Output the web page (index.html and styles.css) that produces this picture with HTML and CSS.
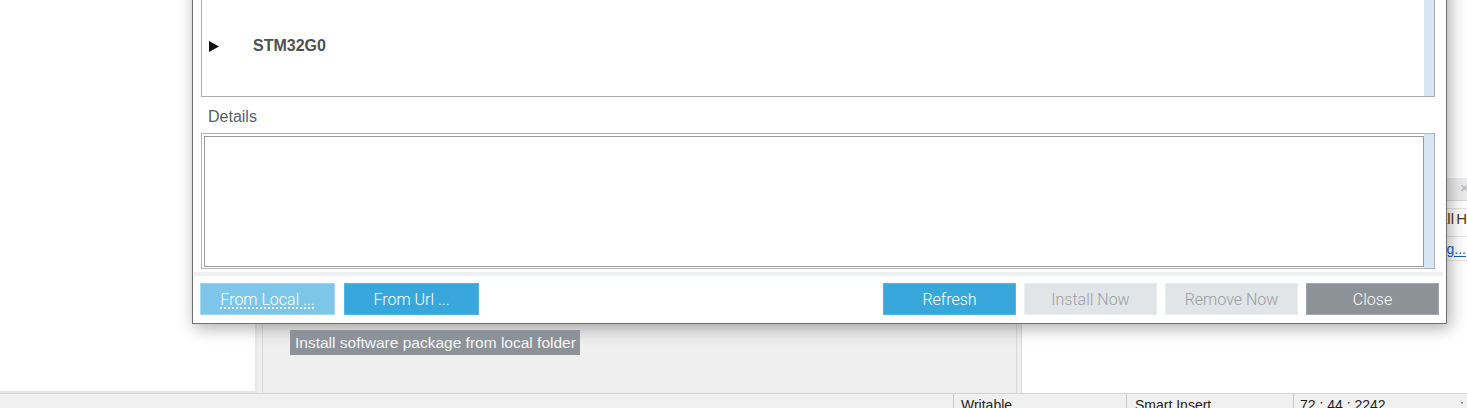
FILE: index.html
```html
<!DOCTYPE html>
<html>
<head>
<meta charset="utf-8">
<title>Embedded Software Packages Manager</title>
<link rel="stylesheet" href="styles.css">
</head>
<body>
<div class="workbench">
  <div class="main">
    <div class="panel-left"></div>
    <div class="panel-mid"></div>
    <div class="panel-right">
      <div class="tabbar"><span class="tab-close">×</span></div>
      <div class="rp-gap"></div>
      <div class="rp-title">Install H</div>
      <div class="rp-link"><a class="link">Config...</a></div>
    </div>
  </div>
  <div class="statusbar">
    <div class="sb-spacer"></div>
    <div class="sb-field sb-f1">Writable</div>
    <div class="sb-field sb-f2">Smart Insert</div>
    <div class="sb-field sb-f3">72 : 44 : 2242</div>
    <div class="sb-grip">:</div>
  </div>
</div>

<div class="dialog">
  <div class="tree">
    <div class="tree-list">
      <div class="tree-row">
        <svg class="twisty" width="10" height="11" viewBox="0 0 10 11"><polygon points="0,0 10,5.5 0,11"/></svg>
        <span class="tree-label">STM32G0</span>
      </div>
    </div>
    <div class="vscroll"></div>
  </div>
  <div class="details-label">Details</div>
  <div class="details">
    <div class="details-text"></div>
    <div class="vscroll"></div>
  </div>
  <div class="sep"></div>
  <div class="actions">
    <div class="group">
      <button class="btn btn-light"><span class="focus-text">From Local ...</span></button>
      <button class="btn btn-blue">From Url ...</button>
    </div>
    <div class="group group-right">
      <button class="btn btn-blue">Refresh</button>
      <button class="btn btn-disabled">Install Now</button>
      <button class="btn btn-disabled">Remove Now</button>
      <button class="btn btn-gray">Close</button>
    </div>
  </div>
</div>

<div class="tooltip">Install software package from local folder</div>
</body>
</html>
```

FILE: styles.css
```css
* { box-sizing: border-box; }
html, body { margin: 0; padding: 0; }
body {
  width: 1467px;
  height: 408px;
  overflow: hidden;
  position: relative;
  background: #efefef;
  font-family: "Liberation Sans", Arial, sans-serif;
}

/* ---------- background workbench ---------- */
.workbench { display: flex; flex-direction: column; height: 408px; }
.main { height: 393px; display: flex; }
.panel-left {
  width: 257px;
  background: #fff;
  border-right: 2px solid #e6e6e6;
  border-bottom: 2px solid #e6e6e6;
}
.panel-mid {
  width: 755px;
  margin-left: 5px;
  background: #efefef;
  border-left: 1px solid #d9d9d9;
  border-right: 1px solid #d9d9d9;
}
.panel-right {
  flex: 1;
  margin-left: 4px;
  background: #fff;
  border-left: 1px solid #d9d9d9;
  display: flex;
  flex-direction: column;
  overflow: hidden;
}
.tabbar {
  margin-top: 178px;
  height: 23px;
  background: #ececec;
  border-bottom: 1px solid #d6d6d6;
  display: flex;
  justify-content: flex-end;
  align-items: center;
}
.tab-close {
  font-size: 15px;
  color: #b0b0b0;
  width: 7px;
  overflow: hidden;
  line-height: 16px;
  margin-bottom: 2px;
}
.rp-gap { height: 7px; }
.rp-title {
  border-top: 1px solid #e3e3e3;
  border-bottom: 1px solid #e3e3e3;
  padding: 1px 0 9px 0;
  font-size: 15px;
  line-height: 17px;
  word-spacing: -2px;
  color: #4a3818;
  text-align: right;
  white-space: nowrap;
}
.rp-link {
  border-bottom: 1px solid #e3e3e3;
  height: 24px;
  padding: 4px 1px 0 0;
  font-size: 14px;
  line-height: 16px;
  text-align: right;
  white-space: nowrap;
}
.link {
  color: #1a5fb4;
  text-decoration: underline;
  text-underline-offset: 2px;
}

.statusbar {
  height: 15px;
  display: flex;
  background: #f0f0f0;
  border-top: 1px solid #d4d4d4;
  font-size: 14px;
  line-height: 14px;
  color: #1e1e1e;
  white-space: nowrap;
}
.sb-spacer { width: 953px; }
.sb-field { border-left: 1px solid #c9c9c9; padding: 4px 0 0 7px; overflow: hidden; }
.sb-f1 { width: 173px; }
.sb-f2 { width: 167px; padding-left: 8px; }
.sb-f3 { width: 160px; padding-left: 6px; }
.sb-grip { width: 14px; padding: 4px 0 0 7px; color: #555; }

/* ---------- dialog ---------- */
.dialog {
  position: absolute;
  left: 192px;
  top: -40px;
  width: 1255px;
  background: #fff;
  border: 1px solid #6f6f6f;
  box-shadow: 3px 4px 16px rgba(0, 0, 0, 0.33);
  padding-bottom: 8px;
  display: flex;
  flex-direction: column;
}
.tree {
  margin: 0 11px 0 8px;
  height: 136px;
  border: 1px solid #acacac;
  display: flex;
}
.tree-list { flex: 1; padding: 74px 0 0 7px; }
.tree-row { height: 20px; display: flex; align-items: center; }
.twisty { fill: #111; margin-right: 34px; }
.tree-label {
  font-weight: bold;
  font-size: 16px;
  color: #505050;
}
.vscroll { width: 10px; background: #d8e6f3; }

.details-label {
  margin: 10px 0 6px 15px;
  font-size: 16px;
  line-height: 20px;
  color: #56606b;
}
.details {
  margin: 0 11px 0 8px;
  height: 136px;
  border: 1px solid #b3b3b3;
  padding-left: 2px;
  display: flex;
}
.details-text {
  flex: 1;
  margin: 2px 0 1px 0;
  border: 1px solid #9a9a9a;
  background: #fff;
}

.sep {
  margin: 3px 3px 0 1px;
  height: 4px;
  background: #eef0f2;
}

.actions {
  margin-top: 7px;
  padding: 0 7px;
  display: flex;
  justify-content: space-between;
}
.group { display: flex; gap: 9px; }
.group-right { gap: 8px; }
.btn {
  height: 32px;
  width: 133px;
  border: 1px solid transparent;
  padding: 0;
  font-family: "Roboto", "Liberation Sans", sans-serif;
  font-weight: 300;
  font-size: 16px;
  color: #fff;
  display: flex;
  align-items: center;
  justify-content: center;
}
.group:first-child .btn { width: 135px; }
.btn-light { background: #7cc6ea; border-color: #a3d7f1; }
.btn-blue { background: #38a8dc; border-color: #55b5e2; }
.btn-disabled { background: #e2e5e8; border-color: #eaecee; color: #9a9ea3; }
.btn-gray { background: #8c9298; border-color: #a2a7ac; color: #fbfbfb; }
.focus-text {
  text-decoration: underline dotted #ffffff;
  text-underline-offset: 3px;
}

/* ---------- tooltip ---------- */
.tooltip {
  position: absolute;
  left: 290px;
  top: 330px;
  width: 290px;
  height: 25px;
  padding-left: 5px;
  background: #8c9297;
  color: #f6f6f6;
  font-size: 15.5px;
  line-height: 25px;
  white-space: nowrap;
}
```
